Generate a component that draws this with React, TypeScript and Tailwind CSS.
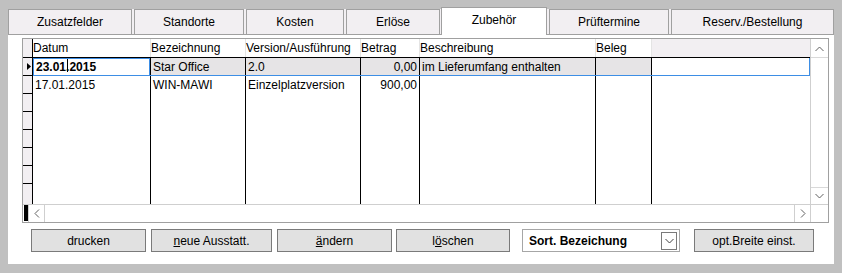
import React from "react";

const Up = () => (
  <svg width="9" height="6" viewBox="0 0 9 6"><polyline points="0.5,5 4.5,1 8.5,5" fill="none" stroke="#606060" strokeWidth="1" /></svg>
);
const Down = ({ c = "#606060" }: { c?: string }) => (
  <svg width="9" height="6" viewBox="0 0 9 6"><polyline points="0.5,1 4.5,5 8.5,1" fill="none" stroke={c} strokeWidth="1" /></svg>
);
const Left = () => (
  <svg width="6" height="9" viewBox="0 0 6 9"><polyline points="5,0.5 1,4.5 5,8.5" fill="none" stroke="#606060" strokeWidth="1" /></svg>
);
const Right = () => (
  <svg width="6" height="9" viewBox="0 0 6 9"><polyline points="1,0.5 5,4.5 1,8.5" fill="none" stroke="#606060" strokeWidth="1" /></svg>
);

const Tab = ({ label, w }: { label: string; w: string }) => (
  <div className={`${w} h-[26px] border border-[#a0a0a0] bg-[#f2eff2] flex items-center justify-center`}>{label}</div>
);
const Gap = ({ w }: { w: string }) => <div className={`${w} h-[26px] bg-[#f2eff2] border-b border-[#a0a0a0]`} />;

type Row = { d: string; b: string; v: string; p: string; s: string };
const rows: Row[] = [
  { d: "17.01.2015", b: "WIN-MAWI", v: "Einzelplatzversion", p: "900,00", s: "" },
  { d: "", b: "", v: "", p: "", s: "" },
  { d: "", b: "", v: "", p: "", s: "" },
  { d: "", b: "", v: "", p: "", s: "" },
  { d: "", b: "", v: "", p: "", s: "" },
  { d: "", b: "", v: "", p: "", s: "" },
];

const Btn = ({ w, children }: { w: string; children: React.ReactNode }) => (
  <div className={`${w} h-[23px] border border-[#7a7a7a] bg-[#e1e1e1] flex items-center justify-center`}>{children}</div>
);

export default function App() {
  return (
    <div className="w-[842px] h-[273px] bg-[#c0c0c0] pt-[7px] pl-[8px] text-[12px] leading-[14px] text-black font-['Liberation_Sans',Arial,sans-serif]">
      <div className="w-[826px]">
        {/* Tabs */}
        <div className="flex items-end h-[28px]">
          <Tab label="Zusatzfelder" w="w-[124px]" />
          <Gap w="w-[2px]" />
          <Tab label="Standorte" w="w-[110px]" />
          <Gap w="w-[2px]" />
          <Tab label="Kosten" w="w-[98px]" />
          <Gap w="w-[2px]" />
          <Tab label="Erlöse" w="w-[94px]" />
          <Gap w="w-[1px]" />
          <div className="w-[106px] h-[28px] border border-b-0 border-[#a0a0a0] bg-white flex items-center justify-center pb-[3px]">Zubehör</div>
          <Gap w="w-[2px]" />
          <Tab label="Prüftermine" w="w-[120px]" />
          <Gap w="w-[2px]" />
          <Tab label="Reserv./Bestellung" w="w-[163px]" />
        </div>
        {/* Panel */}
        <div className="h-[229px] bg-white pt-[3px]">
          <div className="ml-[14px] w-[807px] h-[185px] border border-[#a0a0a0] flex flex-col">
            <div className="flex h-[165px]">
              <div className="w-[787px] flex flex-col">
                {/* Header */}
                <div className="flex h-[19px] border-b border-black">
                  <div className="w-[10px] bg-[#f2eff2] border-r border-black" />
                  <div className="w-[118px] bg-white border-r border-[#e4e4e4] flex items-center">Datum</div>
                  <div className="w-[95px] bg-white border-r border-[#e4e4e4] flex items-center">Bezeichnung</div>
                  <div className="w-[115px] bg-white border-r border-[#e4e4e4] flex items-center">Version/Ausführung</div>
                  <div className="w-[59px] bg-white border-r border-[#e4e4e4] flex items-center">Betrag</div>
                  <div className="w-[176px] bg-white border-r border-[#e4e4e4] flex items-center">Beschreibung</div>
                  <div className="w-[56px] bg-white border-r border-[#e4e4e4] flex items-center">Beleg</div>
                  <div className="flex-1 bg-[#f2eff2]" />
                </div>
                {/* Row 1 (selected) */}
                <div className="flex h-[18px]">
                  <div className="w-[10px] bg-[#f2eff2] border-r border-b border-black flex items-center pl-[4px]">
                    <svg width="4" height="7" viewBox="0 0 4 7"><polygon points="0,0 4,3.5 0,7" fill="#000" /></svg>
                  </div>
                  <div className="flex w-[777px] border-b border-[#3d8ee5]">
                    <div className="w-[118px] border-r border-black">
                      <div className="h-full border-l border-t border-r border-[#3d8ee5] bg-white flex items-center pl-[2px] font-bold">
                        23.01<span className="relative">.<span className="absolute left-[1px] top-[-1px] w-[1px] h-[13px] bg-black" /></span>2015
                      </div>
                    </div>
                    <div className="w-[95px] border-r border-black bg-[#e6e4e6] flex items-center pl-[2px]">Star Office</div>
                    <div className="w-[115px] border-r border-black bg-[#e6e4e6] flex items-center pl-[2px]">2.0</div>
                    <div className="w-[59px] border-r border-black bg-[#e6e4e6] flex items-center justify-end pr-[2px]">0,00</div>
                    <div className="w-[176px] border-r border-black bg-[#e6e4e6] flex items-center pl-[2px]">im Lieferumfang enthalten</div>
                    <div className="w-[56px] border-r border-black bg-[#e6e4e6]" />
                    <div className="w-[158px] border-r border-[#3d8ee5] bg-white" />
                  </div>
                </div>
                {rows.map((r, i) => (
                  <div key={i} className="flex h-[18px]">
                    <div className="w-[10px] bg-[#f2eff2] border-r border-b border-black" />
                    <div className="w-[118px] border-r border-black flex items-center pl-[2px]">{r.d}</div>
                    <div className="w-[95px] border-r border-black flex items-center pl-[2px]">{r.b}</div>
                    <div className="w-[115px] border-r border-black flex items-center pl-[2px]">{r.v}</div>
                    <div className="w-[59px] border-r border-black flex items-center justify-end pr-[2px]">{r.p}</div>
                    <div className="w-[176px] border-r border-black flex items-center pl-[2px]">{r.s}</div>
                    <div className="w-[56px] border-r border-black" />
                    <div className="flex-1" />
                  </div>
                ))}
                <div className="flex h-[20px]">
                  <div className="w-[10px] bg-[#f2eff2] border-r border-black" />
                  <div className="w-[118px] border-r border-black" />
                  <div className="w-[95px] border-r border-black" />
                  <div className="w-[115px] border-r border-black" />
                  <div className="w-[59px] border-r border-black" />
                  <div className="w-[176px] border-r border-black" />
                  <div className="w-[56px] border-r border-black" />
                  <div className="flex-1" />
                </div>
              </div>
              {/* Vertical scrollbar */}
              <div className="w-[18px] border-l border-[#cfcfcf] bg-white flex flex-col justify-between">
                <div className="h-[19px] border-b border-[#d9d9d9] flex items-center justify-center pt-[2px]"><Up /></div>
                <div className="h-[17px] border-t border-[#d9d9d9] flex items-center justify-center"><Down /></div>
              </div>
            </div>
            {/* Horizontal scrollbar */}
            <div className="h-[18px] border-t border-[#cfcfcf] flex bg-white">
              <div className="w-[1px]" />
              <div className="w-[4px] h-[16px] bg-black" />
              <div className="w-[17px] border-l border-r border-[#cfcfcf] flex items-center justify-center"><Left /></div>
              <div className="flex-1" />
              <div className="w-[17px] border-l border-r border-[#cfcfcf] flex items-center justify-center"><Right /></div>
              <div className="w-[17px]" />
            </div>
          </div>
          {/* Buttons */}
          <div className="flex mt-[6px] pl-[23px]">
            <Btn w="w-[115px]">drucken</Btn>
            <div className="w-[5px]" />
            <Btn w="w-[121px]"><span><span className="underline">n</span>eue Ausstatt.</span></Btn>
            <div className="w-[5px]" />
            <Btn w="w-[115px]"><span><span className="underline">ä</span>ndern</span></Btn>
            <div className="w-[4px]" />
            <Btn w="w-[114px]"><span>l<span className="underline">ö</span>schen</span></Btn>
            <div className="w-[12px]" />
            <div className="w-[158px] h-[23px] border border-[#a6a6a6] bg-white flex items-center justify-between pl-[6px] pr-[2px]">
              <span className="font-bold">Sort. Bezeichung</span>
              <div className="w-[16px] h-[18px] border border-[#7a7a7a] bg-white flex items-center justify-center"><Down c="#404040" /></div>
            </div>
            <div className="w-[14px]" />
            <Btn w="w-[120px]">opt.Breite einst.</Btn>
          </div>
        </div>
      </div>
    </div>
  );
}
